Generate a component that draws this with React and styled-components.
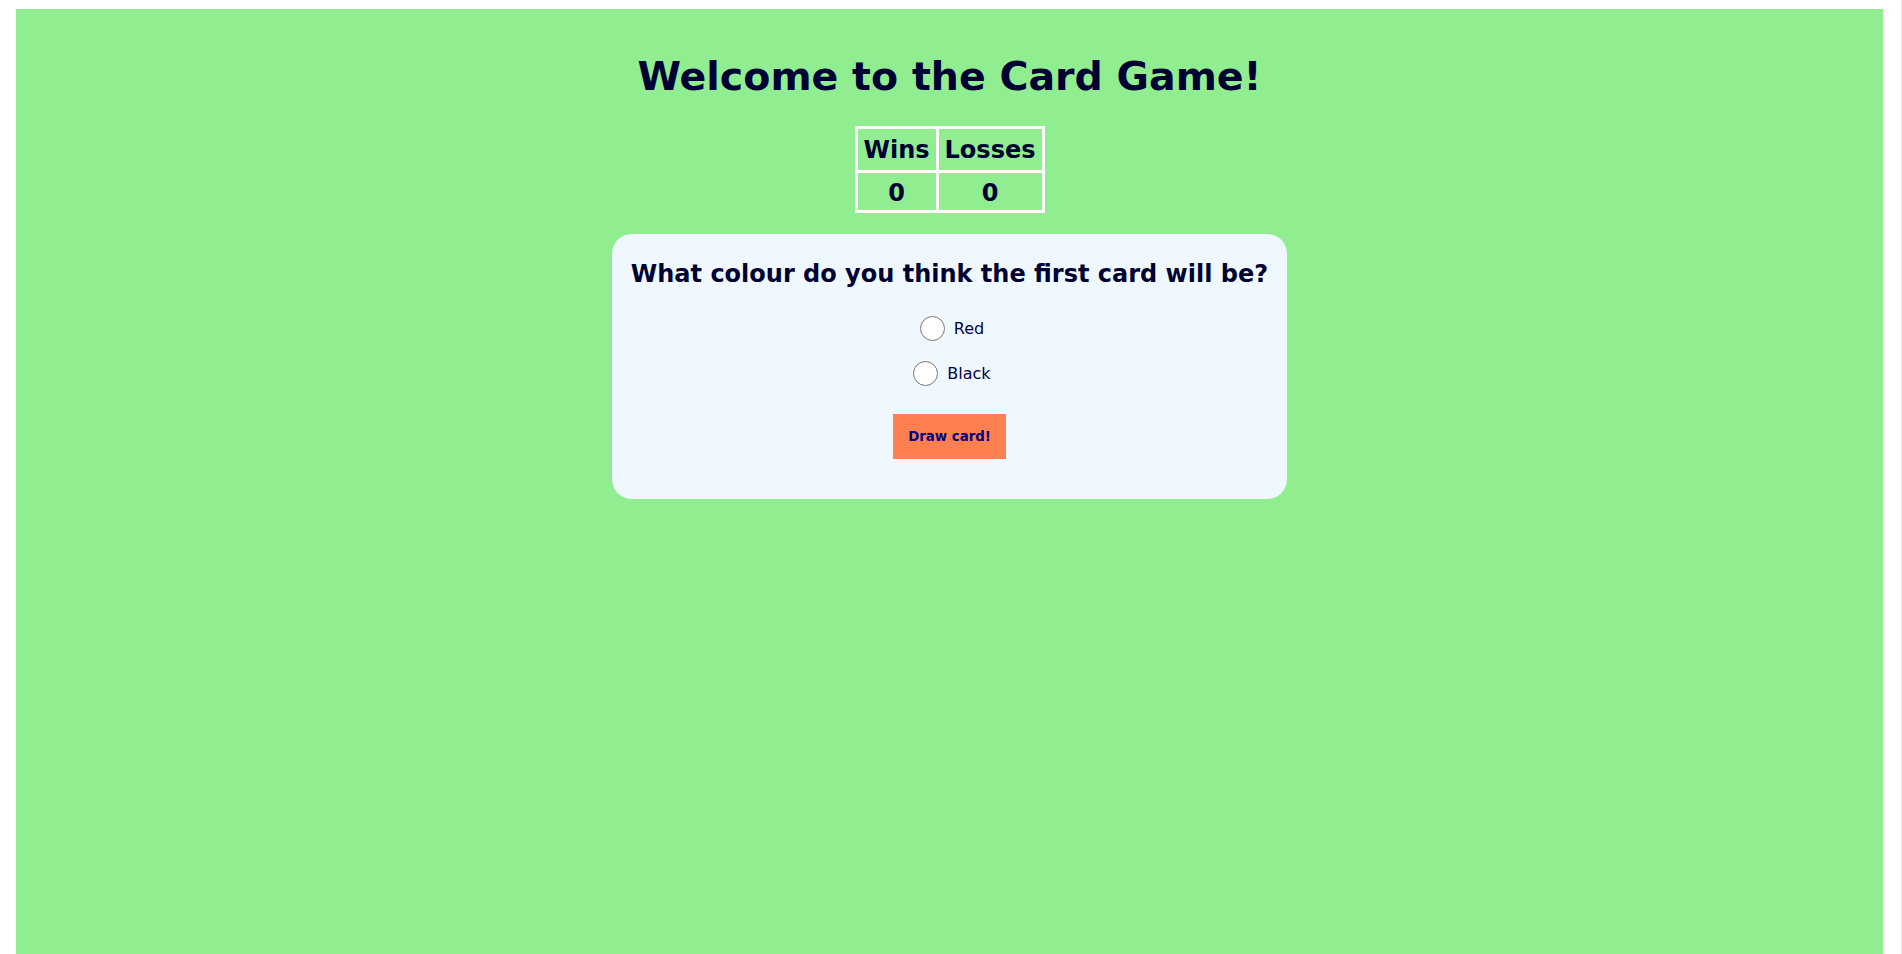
import React, { useState } from 'react'
import styled, { createGlobalStyle } from 'styled-components'

const GlobalStyle = createGlobalStyle`
  body {
    margin: 0;
    font-family: Verdana, "DejaVu Sans", sans-serif;
    color: #000033;
  }
`

const App = () => {
  const [colour, setColour] = useState('')

  return (
    <Page>
      <GlobalStyle />
      <Board>
        <Title>Welcome to the Card Game!</Title>
        <Score>
          <thead>
            <tr>
              <HeadCell>Wins</HeadCell>
              <HeadCell>Losses</HeadCell>
            </tr>
          </thead>
          <tbody>
            <tr>
              <ValueCell>0</ValueCell>
              <ValueCell>0</ValueCell>
            </tr>
          </tbody>
        </Score>
        <Card>
          <Question>What colour do you think the first card will be?</Question>
          <Options>
            {['Red', 'Black'].map(name => (
              <Option key={name}>
                <Radio
                  type="radio"
                  name="colour"
                  value={name}
                  checked={colour === name}
                  onChange={() => setColour(name)}
                />
                {name}
              </Option>
            ))}
          </Options>
          <DrawButton>Draw card!</DrawButton>
        </Card>
      </Board>
    </Page>
  )
}

export default App

/* STYLES */

const Page = styled.div`
  padding: 9px 18px 0 16px;
  border-right: 1px solid #e8e8e8;
  min-height: 100vh;
  box-sizing: border-box;
`

const Board = styled.main`
  background: #90ee90;
  min-height: calc(100vh - 9px);
  padding-top: 18px;
  box-sizing: border-box;
  display: flex;
  flex-direction: column;
  align-items: center;
`

const Title = styled.h1`
  font-size: 39.5px;
  font-weight: bold;
  line-height: normal;
  margin: 26px 0 27px;
`

const Score = styled.table`
  border-collapse: collapse;
  border: 3px solid #ffffff;
`

const HeadCell = styled.th`
  border: 3px solid #ffffff;
  font-size: 24px;
  font-weight: bold;
  padding: 7px 6px 6px;
`

const ValueCell = styled.td`
  border: 3px solid #ffffff;
  font-size: 24px;
  font-weight: bold;
  text-align: center;
  padding: 6px 6px 3px;
`

const Card = styled.section`
  margin-top: 21px;
  width: fit-content;
  background: #f0f8ff;
  border-radius: 20px;
  padding: 6px 19px 40px;
  display: flex;
  flex-direction: column;
  align-items: center;
`

const Question = styled.h2`
  font-size: 24px;
  font-weight: bold;
  line-height: normal;
  margin: 20px 0 26px;
`

const Options = styled.div`
  display: flex;
  flex-direction: column;
  align-items: center;
  gap: 17px;
`

const Option = styled.label`
  display: flex;
  align-items: center;
  height: 28px;
  font-size: 16px;
  color: #000050;
`

const Radio = styled.input`
  width: 25px;
  height: 25px;
  margin: 0 9px 0 5px;
`

const DrawButton = styled.button`
  margin-top: 27px;
  background: #ff7f50;
  color: #000080;
  border: none;
  padding: 15px;
  font-family: Verdana, "DejaVu Sans", sans-serif;
  font-size: 13.333px;
  font-weight: bold;
  line-height: normal;
`
